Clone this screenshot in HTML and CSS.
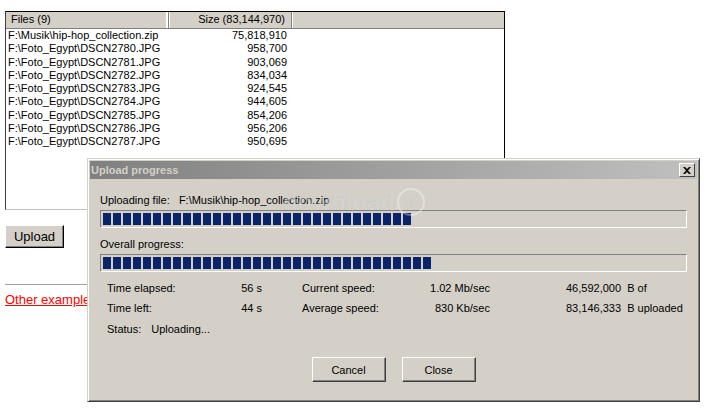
FILE: index.html
```html
<!DOCTYPE html>
<html lang="en">
<head>
    <meta charset="UTF-8">
    <title>Upload progress</title>
    <link rel="stylesheet" href="styles.css">
</head>
<body>
    <div class="page">
        <div class="file-list">
            <div class="list-head">
                <div class="col-name">Files (9)</div>
                <div class="col-size">Size (83,144,970)</div>
                <div class="col-rest"></div>
            </div>
            <div class="list-body">
                <div class="row"><span class="name">F:\Musik\hip-hop_collection.zip</span><span class="size">75,818,910</span></div>
                <div class="row"><span class="name">F:\Foto_Egypt\DSCN2780.JPG</span><span class="size">958,700</span></div>
                <div class="row"><span class="name">F:\Foto_Egypt\DSCN2781.JPG</span><span class="size">903,069</span></div>
                <div class="row"><span class="name">F:\Foto_Egypt\DSCN2782.JPG</span><span class="size">834,034</span></div>
                <div class="row"><span class="name">F:\Foto_Egypt\DSCN2783.JPG</span><span class="size">924,545</span></div>
                <div class="row"><span class="name">F:\Foto_Egypt\DSCN2784.JPG</span><span class="size">944,605</span></div>
                <div class="row"><span class="name">F:\Foto_Egypt\DSCN2785.JPG</span><span class="size">854,206</span></div>
                <div class="row"><span class="name">F:\Foto_Egypt\DSCN2786.JPG</span><span class="size">956,206</span></div>
                <div class="row"><span class="name">F:\Foto_Egypt\DSCN2787.JPG</span><span class="size">950,695</span></div>
            </div>
        </div>

        <button class="win-btn upload-btn">Upload</button>

        <hr class="divider">

        <a class="other-link" href="#">Other examples</a>
    </div>

    <div class="dialog">
        <div class="title-bar">
            <span class="title">Upload progress</span>
            <span class="close-btn">
                <svg width="8" height="7" viewBox="0 0 8 7"><path d="M0 0h2l2 2 2-2h2L5 3.5 8 7H6L4 5 2 7H0l3-3.5z" fill="#000"/></svg>
            </span>
        </div>
        <div class="dialog-body">
            <div class="label">Uploading file:&nbsp;&nbsp; F:\Musik\hip-hop_collection.zip</div>
            <div class="progress"><div class="fill" style="width: 310px"></div></div>

            <div class="label gap-top">Overall progress:</div>
            <div class="progress"><div class="fill" style="width: 330px"></div></div>

            <div class="stats">
                <span>Time elapsed:</span><span class="num">56 s</span>
                <span class="lbl2">Current speed:</span><span class="num">1.02 Mb/sec</span>
                <span class="lbl3">46,592,000&nbsp; B of</span>

                <span>Time left:</span><span class="num">44 s</span>
                <span class="lbl2">Average speed:</span><span class="num">830 Kb/sec</span>
                <span class="lbl3">83,146,333&nbsp; B uploaded</span>
            </div>
            <div class="status"><span>Status:</span><span>Uploading...</span></div>

            <div class="buttons">
                <button class="win-btn">Cancel</button>
                <button class="win-btn">Close</button>
            </div>
        </div>
    </div>

    <div class="watermark">download<span class="mark-3k">3k</span></div>
</body>
</html>
```

FILE: styles.css
```css
body {
    margin: 0;
    background: #fff;
    font-family: "Liberation Sans", Arial, sans-serif;
    font-size: 11px;
    color: #000;
    width: 705px;
    height: 414px;
    overflow: hidden;
    position: relative;
}

.page {
    padding: 11px 0 0 5px;
}

/* file list */

.file-list {
    width: 498px;
    height: 197px;
    border: 1px solid #000;
    border-bottom-color: #c0c0c0;
    border-left-color: #404040;
}

.list-head {
    display: flex;
    height: 16px;
    line-height: 15px;
    background: #d4d0c8;
    border-bottom: 1px solid #808080;
}

.col-name {
    width: 157px;
    padding-left: 5px;
    border-right: 1px solid #808080;
    box-shadow: inset -2px 0 0 #fff;
}

.col-size {
    width: 116px;
    padding-right: 6px;
    text-align: right;
    border-right: 1px solid #808080;
    box-shadow: inset 1px 0 0 #fff;
}

.col-rest {
    flex: 1;
    box-shadow: inset 1px 0 0 #fff;
}

.list-body {
    padding: 0 0 0 2px;
}

.row {
    display: flex;
    height: 13.25px;
    line-height: 13px;
}

.row .name {
    width: 160px;
}

.row .size {
    width: 119px;
    text-align: right;
}

/* buttons */

.win-btn {
    font-family: "Liberation Sans", Arial, sans-serif;
    background: #d4d0c8;
    color: #000;
    border: 1px solid;
    border-color: #fff #404040 #404040 #fff;
    box-shadow: inset -1px -1px 0 #808080, inset 1px 1px 0 #d4d0c8;
    padding: 0;
    cursor: pointer;
}

.upload-btn {
    display: block;
    margin-top: 15px;
    width: 59px;
    height: 23px;
    font-size: 13px;
    border-color: #fff #000 #000 #fff;
}

.divider {
    margin: 36px 0 0 0;
    width: 620px;
    border: 0;
    border-top: 1px solid #a0a0a0;
    height: 0;
}

.other-link {
    display: block;
    margin-top: 7px;
    color: #ff0000;
    font-size: 13px;
}

/* dialog */

.dialog {
    position: absolute;
    left: 87px;
    top: 158px;
    width: 607px;
    height: 238px;
    background: #d4d0c8;
    border: 1px solid;
    border-color: #d4d0c8 #404040 #404040 #d4d0c8;
    box-shadow: inset 1px 1px 0 #fff, inset -1px -1px 0 #808080;
    padding: 2px;
}

.title-bar {
    display: flex;
    align-items: center;
    justify-content: space-between;
    height: 18px;
    padding: 0 2px 0 1px;
    background: linear-gradient(to right, #808080, #c0c0c0);
}

.title {
    font-weight: bold;
    color: #d4d0c8;
    font-size: 11px;
}

.close-btn {
    display: flex;
    align-items: center;
    justify-content: center;
    width: 14px;
    height: 12px;
    background: #d4d0c8;
    border: 1px solid;
    border-color: #fff #404040 #404040 #fff;
}

.dialog-body {
    padding: 15px 10px 0 10px;
}

.label {
    line-height: 13px;
}

.gap-top {
    margin-top: 10px;
}

.progress {
    margin-top: 3px;
    height: 15px;
    padding: 1px 2px 0 2px;
    background: #d4d0c8;
    border: 1px solid;
    border-color: #808080 #fff #fff #808080;
}

.fill {
    height: 12px;
    margin-top: 1px;
    background: repeating-linear-gradient(to right, #0a246a 0, #0a246a 8px, transparent 8px, transparent 10px);
}

.stats {
    display: grid;
    grid-template-columns: 115px 40px 140px 88px 1fr;
    grid-auto-rows: 20px;
    align-items: center;
    margin: 6px 0 0 7px;
    white-space: nowrap;
}

.stats .num {
    text-align: right;
}

.stats .lbl2 {
    padding-left: 40px;
}

.stats .lbl3 {
    padding-left: 76px;
}

.status {
    display: flex;
    gap: 10px;
    margin: 1px 0 0 7px;
    line-height: 20px;
}

.buttons {
    display: flex;
    justify-content: center;
    gap: 16px;
    margin-top: 18px;
}

.buttons .win-btn {
    width: 74px;
    height: 25px;
    font-size: 11px;
}

/* site watermark over the dialog */

.watermark {
    position: absolute;
    left: 283px;
    top: 188px;
    font-size: 24px;
    line-height: 28px;
    font-weight: bold;
    color: rgba(255, 255, 255, 0.35);
    text-shadow: 0 0 1px rgba(120, 120, 120, 0.25);
    pointer-events: none;
    display: flex;
    align-items: center;
}

.mark-3k {
    display: inline-flex;
    align-items: center;
    justify-content: center;
    width: 24px;
    height: 24px;
    margin-left: 2px;
    border-radius: 50%;
    border: 2px solid rgba(255, 255, 255, 0.35);
    font-size: 13px;
}
```
